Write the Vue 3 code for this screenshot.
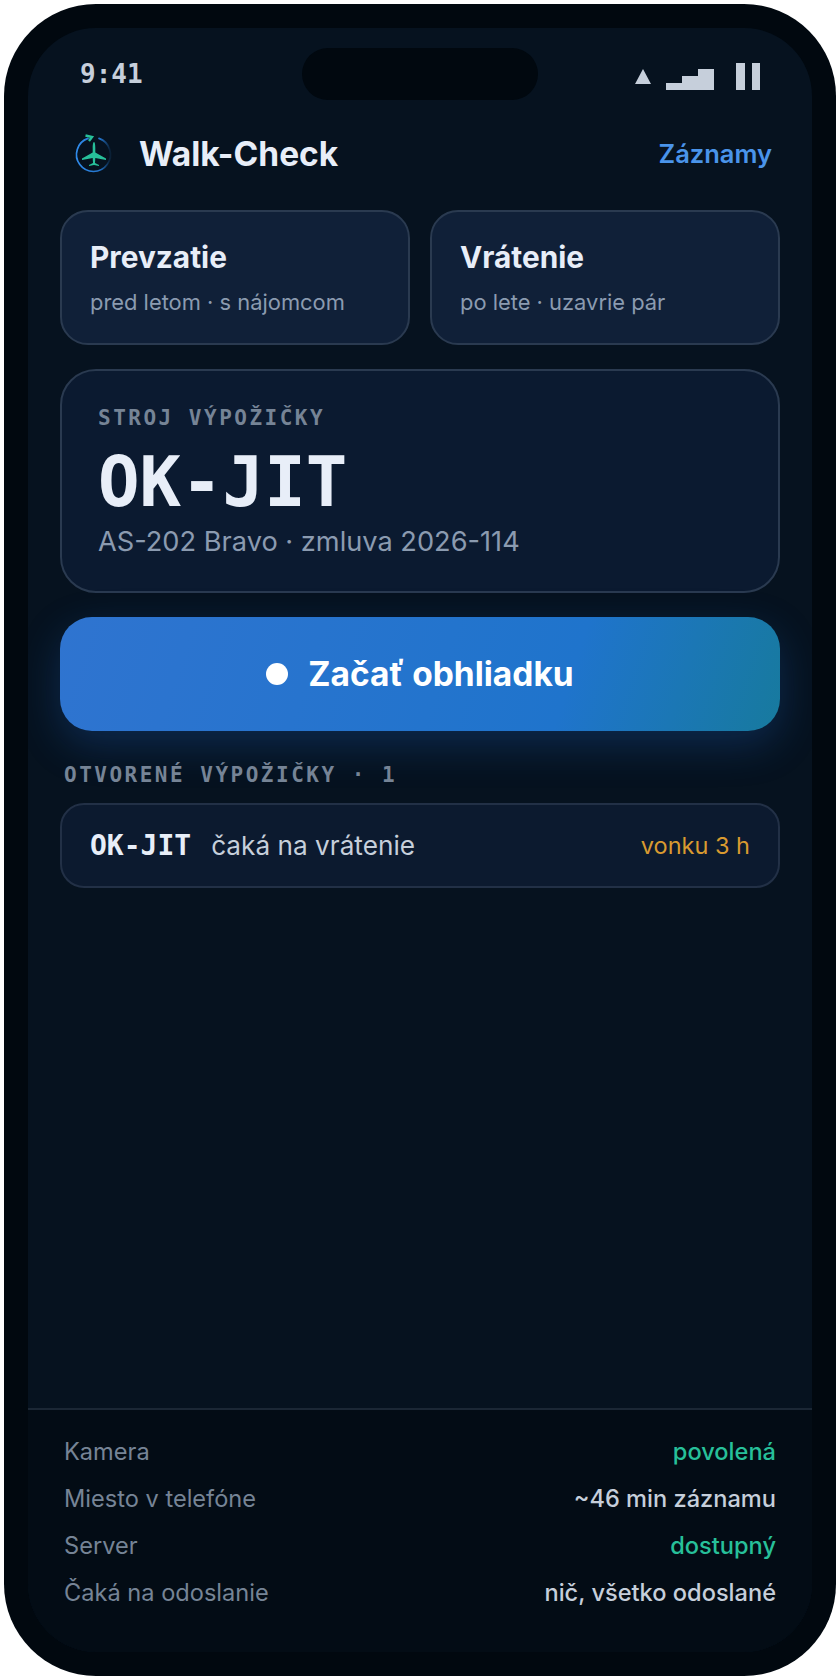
<script setup>
const modes = [
  { title: 'Prevzatie', sub: 'pred letom · s nájomcom' },
  { title: 'Vrátenie', sub: 'po lete · uzavrie pár' },
];

const checks = [
  { label: 'Kamera', value: 'povolená', ok: true },
  { label: 'Miesto v telefóne', value: '~46 min záznamu', ok: false },
  { label: 'Server', value: 'dostupný', ok: true },
  { label: 'Čaká na odoslanie', value: 'nič, všetko odoslané', ok: false },
];
</script>

<template>
  <div class="phone">
    <div class="screen">
      <div class="status">
        <span class="time">9:41</span>
        <div class="island"></div>
        <svg class="status-icons" width="126" height="28" viewBox="0 0 126 28">
          <path d="M9 7 L17 22 H1 Z" />
          <rect x="32" y="21" width="16" height="7" />
          <rect x="48" y="14" width="16" height="14" />
          <rect x="64" y="7" width="16" height="21" />
          <rect x="102" y="1" width="9" height="27" />
          <rect x="118" y="1" width="8" height="27" />
        </svg>
      </div>

      <header class="top">
        <div class="brand">
          <svg class="logo" width="44" height="44" viewBox="0 -2 44 44" fill="none">
            <defs>
              <linearGradient id="ring" x1="6" y1="14" x2="38" y2="14" gradientUnits="userSpaceOnUse">
                <stop offset="0" stop-color="#2f8aea" />
                <stop offset="0.7" stop-color="#2272c8" />
                <stop offset="1" stop-color="#0a2036" />
              </linearGradient>
            </defs>
            <path d="M16 4.4 A17 17 0 1 0 27 4.4" stroke="url(#ring)" stroke-width="1.7" stroke-linecap="round" />
            <path d="M13.5 1.5 L20 3 L17 7" stroke="#27c09a" stroke-width="2.4" />
            <path
              fill="#27c09a"
              d="M22 8 C22.9 8 23.3 11 23.3 14 L23.3 18.5 L34 24.5 L34 26 L23.3 24 L23 29 L27 31 L27 32 L22 31 L17 32 L17 31 L21 29 L20.7 24 L10 26 L10 24.5 L20.7 18.5 L20.7 14 C20.7 11 21.1 8 22 8 Z"
            />
          </svg>
          <span class="name">Walk-Check</span>
        </div>
        <span class="records">Záznamy</span>
      </header>

      <main class="content">
        <div class="modes">
          <div v-for="mode in modes" :key="mode.title" class="mode">
            <div class="mode-title">{{ mode.title }}</div>
            <div class="mode-sub">{{ mode.sub }}</div>
          </div>
        </div>

        <section class="hero">
          <div class="label">STROJ VÝPOŽIČKY</div>
          <div class="reg">OK-JIT</div>
          <div class="hero-sub">AS-202 Bravo · zmluva 2026-114</div>
        </section>

        <button class="start">
          <span class="dot"></span>
          Začať obhliadku
        </button>

        <div class="label open-label">OTVORENÉ VÝPOŽIČKY · 1</div>
        <div class="open-row">
          <span class="open-reg">OK-JIT</span>
          <span class="open-state">čaká na vrátenie</span>
          <span class="open-time">vonku 3 h</span>
        </div>
      </main>

      <footer class="checks">
        <div v-for="row in checks" :key="row.label" class="check">
          <span class="check-label">{{ row.label }}</span>
          <span class="check-value" :class="{ ok: row.ok }">{{ row.value }}</span>
        </div>
      </footer>
    </div>
  </div>
</template>

<style>
html,
body {
  background: #fff;
}
</style>

<style scoped>
.phone {
  box-sizing: border-box;
  width: 832px;
  height: 1672px;
  margin: 4px;
  padding: 24px;
  border-radius: 92px;
  background: #01080f;
  font-family: Inter, Roboto, sans-serif;
}
.screen {
  display: flex;
  flex-direction: column;
  height: 100%;
  border-radius: 68px;
  overflow: hidden;
  background: #06121f;
}
.status {
  display: grid;
  grid-template-columns: 1fr 236px 1fr;
  align-items: center;
  height: 52px;
  margin-top: 20px;
  padding: 0 52px;
}
.time {
  font-family: "DejaVu Sans Mono", monospace;
  font-size: 26px;
  font-weight: 700;
  color: #c6cfdb;
}
.island {
  height: 52px;
  border-radius: 26px;
  background: #01080f;
}
.status-icons {
  justify-self: end;
  fill: #c6cfdb;
  margin-top: 4px;
}
.top {
  display: flex;
  align-items: center;
  justify-content: space-between;
  height: 44px;
  margin-top: 32px;
  padding: 0 40px 0 44px;
}
.brand {
  display: flex;
  align-items: center;
  gap: 23px;
}
.name {
  font-size: 33.5px;
  font-weight: 700;
  color: #e8eef8;
}
.records {
  margin-top: -2px;
  font-size: 25.5px;
  font-weight: 600;
  color: #4a94ea;
}
.content {
  flex: 1;
  padding: 34px 32px 0;
}
.modes {
  display: grid;
  grid-template-columns: 1fr 1fr;
  gap: 20px;
}
.mode {
  box-sizing: border-box;
  height: 135px;
  padding: 28px 28px 0;
  border: 2px solid #2a3a50;
  border-radius: 28px;
  background: #102038;
}
.mode-title {
  font-size: 29.8px;
  line-height: 34px;
  font-weight: 700;
  color: #e8eef8;
}
.mode-sub {
  margin-top: 14px;
  font-size: 21.9px;
  line-height: 28px;
  color: #8b9bb0;
}
.hero {
  box-sizing: border-box;
  height: 224px;
  margin-top: 24px;
  padding: 34px 36px 0;
  border: 2px solid #2a3a50;
  border-radius: 36px;
  background: #0b1a30;
}
.label {
  font-family: "DejaVu Sans Mono", monospace;
  font-size: 21px;
  line-height: 26px;
  font-weight: 700;
  letter-spacing: 2.5px;
  color: #768496;
}
.reg {
  margin-top: 13px;
  font-family: "DejaVu Sans Mono", monospace;
  font-size: 69px;
  line-height: 76px;
  font-weight: 700;
  color: #e8eef8;
}
.hero-sub {
  margin-top: 5px;
  font-size: 27.2px;
  line-height: 34px;
  color: #8b9bb0;
}
.start {
  display: flex;
  align-items: center;
  justify-content: center;
  gap: 20px;
  width: 100%;
  height: 114px;
  margin-top: 24px;
  border: none;
  border-radius: 32px;
  background: linear-gradient(108deg, #2f74d0 0%, #1f74cc 70%, #177a9e 100%);
  box-shadow: 0 14px 40px rgba(30, 110, 220, 0.25);
  font-family: inherit;
  font-size: 33.5px;
  font-weight: 700;
  color: #fff;
}
.dot {
  width: 22px;
  height: 22px;
  border-radius: 50%;
  background: #fff;
}
.open-label {
  margin: 31px 0 0 4px;
}
.open-row {
  box-sizing: border-box;
  display: flex;
  align-items: center;
  height: 85px;
  margin-top: 15px;
  padding: 0 28px;
  border: 2px solid #223046;
  border-radius: 24px;
  background: #0c1a2f;
}
.open-reg {
  font-family: "DejaVu Sans Mono", monospace;
  font-size: 28px;
  font-weight: 700;
  color: #e8eef8;
}
.open-state {
  margin-left: 20px;
  font-size: 26.2px;
  color: #c6cfdb;
}
.open-time {
  margin-left: auto;
  font-size: 23.5px;
  color: #d99a30;
}
.checks {
  display: flex;
  flex-direction: column;
  gap: 13px;
  height: 244px;
  box-sizing: border-box;
  padding: 25px 36px 0;
  border-top: 2px solid #1b2735;
  background: #030c15;
  font-size: 23.6px;
  line-height: 34px;
}
.check {
  display: flex;
  justify-content: space-between;
}
.check-label {
  color: #768496;
}
.check-value {
  font-weight: 500;
  color: #c6cfdb;
}
.check-value.ok {
  color: #27c09a;
}
</style>
